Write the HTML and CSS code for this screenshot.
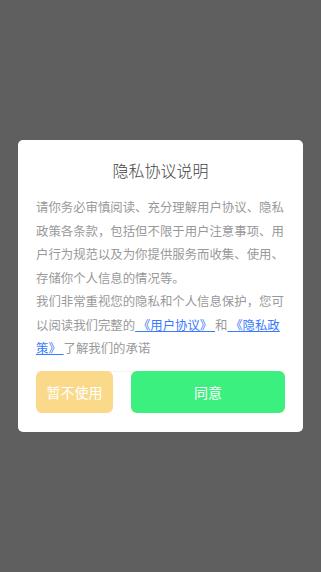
FILE: index.html
```html
<!DOCTYPE html>
<html lang="zh-CN">
<head>
<meta charset="utf-8">
<title>隐私协议说明</title>
<link rel="stylesheet" href="styles.css">
</head>
<body>
<div class="overlay">
  <div class="dialog">
    <h1 class="title">隐私协议说明</h1>
    <div class="content">
      <p>请你务必审慎阅读、充分理解用户协议、隐私政策各条款，包括但不限于用户注意事项、用户行为规范以及为你提供服务而收集、使用、存储你个人信息的情况等。</p>
      <p>我们非常重视您的隐私和个人信息保护，您可以阅读我们完整的<a class="link" href="#"> 《用户协议》 </a>和<a class="link" href="#"> 《隐私政策》 </a>了解我们的承诺</p>
    </div>
    <div class="actions">
      <button class="btn btn-reject">暂不使用</button>
      <button class="btn btn-agree">同意</button>
    </div>
  </div>
</div>
</body>
</html>
```
FILE: styles.css
```css
html, body {
  margin: 0;
  padding: 0;
  height: 100%;
}
body {
  background: #5f5f5f;
  font-family: "Noto Sans CJK SC", "Noto Sans", sans-serif;
}
.overlay {
  height: 572px;
  display: flex;
  align-items: center;
  justify-content: center;
}
.dialog {
  width: 285px;
  box-sizing: border-box;
  background: #ffffff;
  border-radius: 5px;
  padding: 18px 18px 19px;
}
.title {
  margin: 0;
  font-size: 16px;
  font-weight: 300;
  line-height: 24px;
  color: #444444;
  text-align: center;
}
.content {
  margin-top: 14px;
  font-size: 12.4px;
  line-height: 23.5px;
  color: #999999;
}
.content p {
  margin: 0;
}
.link {
  color: #3a7afe;
  text-decoration: underline;
}
.actions {
  margin-top: 10px;
  display: flex;
  gap: 18px;
  border-top: 1px solid #f3f3f3;
}
.btn {
  margin-top: -1px;
  height: 42px;
  border: none;
  border-radius: 6px;
  color: #ffffff;
  font-family: "Noto Sans CJK SC", "Noto Sans", sans-serif;
  font-size: 14px;
  padding: 0;
}
.btn-reject {
  flex: 1;
  background: #fbd98b;
}
.btn-agree {
  flex: 2;
  background: #3cf080;
}
```
